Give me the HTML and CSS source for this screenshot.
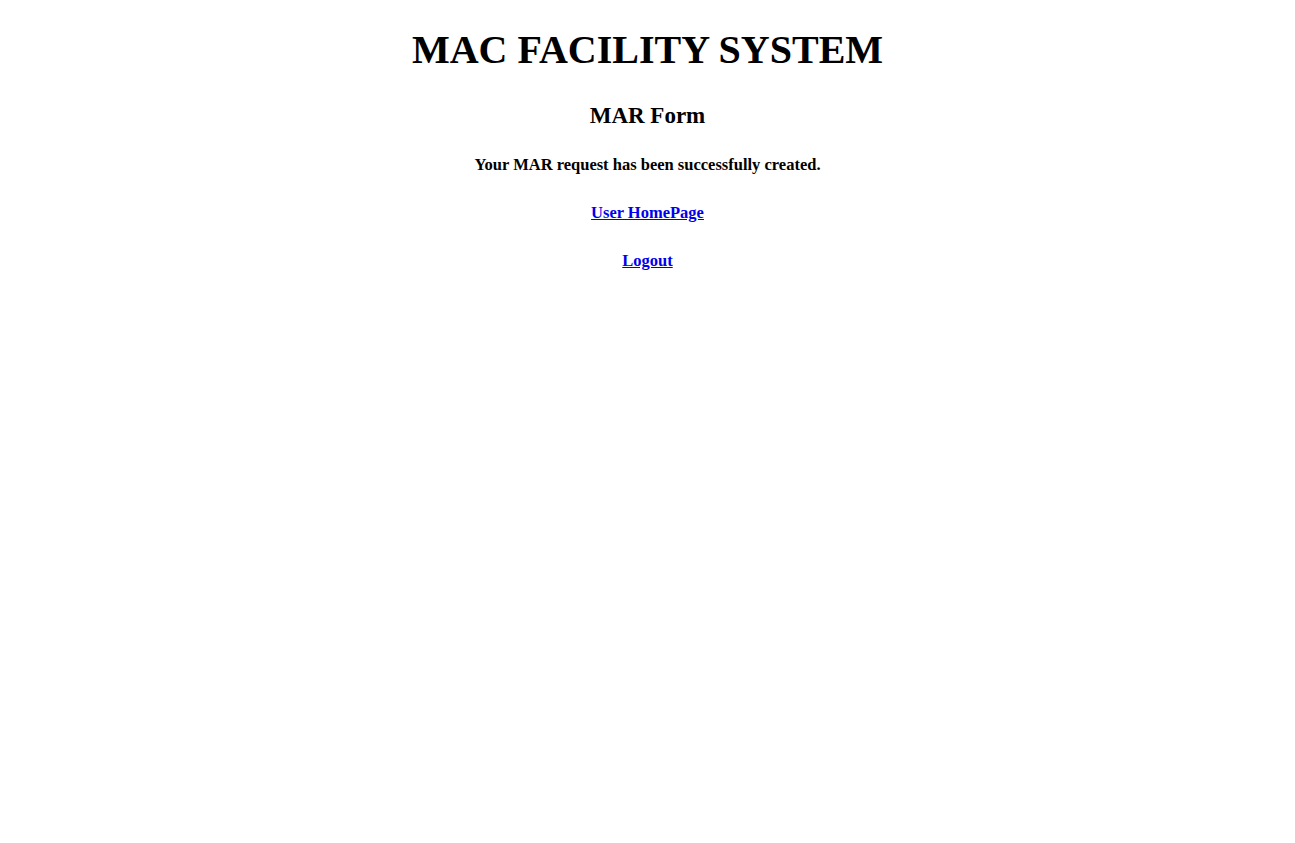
FILE: index.html
```html
<!DOCTYPE html>
<html>
<head>
<meta charset="utf-8">
<link rel="stylesheet" href="styles.css">
</head>
<body>
<div class="page">
  <h1 class="title">MAC FACILITY SYSTEM</h1>
  <h2 class="subtitle">MAR Form</h2>
  <p class="message">Your MAR request has been successfully created.</p>
  <p class="line"><a href="#">User HomePage</a></p>
  <p class="line"><a href="#">Logout</a></p>
</div>
</body>
</html>
```
FILE: styles.css
```css
body {
  margin: 8px;
  font-family: "Liberation Serif", "Times New Roman", serif;
  background: #fff;
  color: #000;
}
.page {
  display: flex;
  flex-direction: column;
  align-items: center;
  text-align: center;
}
.title {
  font-size: 40px;
  font-weight: bold;
  margin: 19px 0 0;
  line-height: 46px;
}
.subtitle {
  font-size: 23px;
  font-weight: bold;
  margin: 30px 0 0;
  line-height: 26px;
}
.message,
.line {
  font-size: 16.5px;
  font-weight: bold;
  line-height: 19px;
}
.message {
  margin: 26px 0 0;
}
.line {
  margin: 29px 0 0;
}
.line a {
  color: #0000ee;
  text-decoration: underline;
}
```
